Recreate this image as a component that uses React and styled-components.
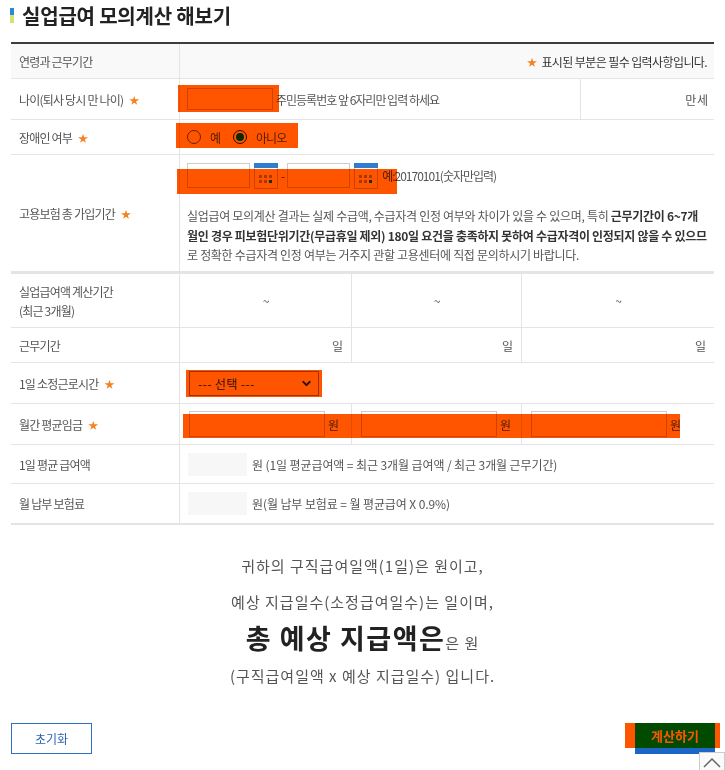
import React from 'react'
import styled, {createGlobalStyle, css} from 'styled-components'
import {ChevronDown} from 'lucide-react'

const GlobalStyle = createGlobalStyle`
  html, body {
    margin: 0;
    padding: 0;
    background: #fff;
  }
  body {
    font-family: "Noto Sans CJK KR", "Noto Sans", sans-serif;
    color: #555;
  }
  *, *::before, *::after {
    box-sizing: border-box;
  }
`

const orange = '#ff5500'
const line = '#e4e4e4'

// orange marker laid over a control (multiply so the control shows through)
const marked = css`
  position: relative;
  &::after {
    content: '';
    position: absolute;
    inset: ${p => p.$mark};
    background: ${orange};
    mix-blend-mode: multiply;
    pointer-events: none;
  }
`

const Page = styled.div`
  width: 725px;
  padding: 0 11px 16px;
`

const Title = styled.h2`
  display: flex;
  align-items: center;
  gap: 8px;
  height: 30px;
  margin: 0 0 12px -1px;
  font-size: 20px;
  font-weight: 700;
  letter-spacing: -0.2px;
  color: #222;
`

const TitleMark = styled.span`
  width: 4px;
  height: 15px;
  background: linear-gradient(#2a8ad4 50%, #d6e36b 50%);
`

const Form = styled.div`
  border-top: 2px solid #3d3d3d;
  border-bottom: 2px solid ${line};
`

const Row = styled.div`
  display: grid;
  grid-template-columns: 169px 1fr;
  height: ${p => p.$h}px;
  border-bottom: ${p => (p.$thick ? 3 : 1)}px solid ${line};
  background: ${p => (p.$head ? '#f9f9f9' : '#fff')};
  &:last-child {
    border-bottom: 0;
  }
`

const Label = styled.div`
  display: flex;
  align-items: center;
  padding: 0 8px;
  border-right: 1px solid ${line};
  font-size: 12px;
  line-height: 19px;
  letter-spacing: -0.8px;
  color: #555;
`

const Star = styled.span`
  color: #f5821f;
  font-size: 10px;
  margin: ${p => (p.$lead ? '0 5px 0 0' : '0 0 0 6px')};
`

const Cells = styled.div`
  display: grid;
  grid-template-columns: ${p => p.$cols || '1fr'};
  ${p => p.$mark && marked}
`

const Cell = styled.div`
  display: flex;
  flex-direction: ${p => (p.$stack ? 'column' : 'row')};
  align-items: ${p => (p.$stack ? 'flex-start' : 'center')};
  justify-content: ${p => p.$align || 'flex-start'};
  padding: ${p => (p.$stack ? '8px' : '0')} ${p => p.$pr ?? 7}px 0 ${p => p.$pl ?? 7}px;
  font-size: 12px;
  line-height: 17px;
  letter-spacing: ${p => (p.$dark ? '-0.6px' : '-1px')};
  color: ${p => (p.$dark ? '#333' : '#555')};
  & + & {
    border-left: 1px solid ${line};
  }
`

const Mark = styled.div`
  display: inline-flex;
  align-items: center;
  ${marked}
`

const Input = styled.input`
  width: ${p => p.$w}px;
  height: ${p => p.$ht}px;
  margin: 0;
  padding: 0;
  border: 1px solid #ccc;
  background: #fff;
  outline: none;
`

const Hint = styled.span`
  margin-left: ${p => p.$gap ?? 3}px;
  white-space: nowrap;
`

const Formula = styled(Hint)`
  letter-spacing: -0.1px;
`

const RadioGroup = styled.div`
  display: flex;
  align-items: center;
  gap: 13px;
  height: 14px;
`

const RadioOption = styled.label`
  display: flex;
  align-items: center;
  gap: 9px;
`

const Radio = styled.span`
  display: inline-flex;
  align-items: center;
  justify-content: center;
  width: 14px;
  height: 14px;
  border-radius: 50%;
  border: 1px solid ${p => (p.$on ? '#222' : '#666')};
  &::after {
    content: '';
    width: 8px;
    height: 8px;
    border-radius: 50%;
    background: ${p => (p.$on ? '#0a7d0a' : 'transparent')};
  }
`

const DateRow = styled.div`
  display: flex;
  align-items: center;
  height: 25px;
`

const DateGroup = styled.div`
  display: flex;
  align-items: center;
  gap: 4px;
`

const Dash = styled.span`
  margin: 0 3px;
`

const Notice = styled.p`
  margin: 18px 0 0;
  font-size: 12px;
  line-height: 19.5px;
  letter-spacing: -0.3px;
  color: #555;
  b {
    color: #333;
  }
`

const Select = styled.div`
  display: flex;
  align-items: center;
  justify-content: space-between;
  width: 130px;
  height: 25px;
  padding: 0 5px 0 8px;
  border: 1px solid #999;
  background: #fff;
  color: #333;
  letter-spacing: 0.4px;
`

const Unit = styled.span`
  margin-left: 3px;
`

const ReadBox = styled.span`
  width: 59px;
  height: 23px;
  background: #f7f7f7;
`

const Result = styled.div`
  margin-top: 23px;
  text-align: center;
  font-size: 15px;
  line-height: 36px;
  letter-spacing: 1px;
  color: #555;
`

const ResultLine = styled.p`
  height: 36px;
  margin: ${p => (p.$last ? '2px 0 0' : '0')};
  padding-top: ${p => (p.$big ? 4 : 0)}px;
`

const Total = styled.strong`
  font-size: 27px;
  line-height: 1;
  letter-spacing: 1.5px;
  color: #222;
`

const Actions = styled.div`
  display: flex;
  justify-content: space-between;
  align-items: flex-start;
  margin-top: 29px;
`

const ResetButton = styled.button`
  width: 81px;
  height: 31px;
  border: 1px solid #2a72c1;
  background: #fff;
  color: #2a64b0;
  font: 12px "Noto Sans CJK KR", sans-serif;
`

const CalcGroup = styled.div`
  display: flex;
  flex-direction: column;
  align-items: flex-end;
  margin-right: -6px;
`

const CalcMark = styled.div`
  padding: 0 5px 0 10px;
  background: ${orange};
`

const CalcButton = styled.button`
  display: block;
  width: 80px;
  height: 25px;
  border: 0;
  background: #004b00;
  color: ${orange};
  font: 700 13px "Noto Sans CJK KR", sans-serif;
`

const CalcShadow = styled.div`
  width: 80px;
  height: 6px;
  margin-right: 5px;
  background: #1b66c6;
`

const ScrollTop = styled.button`
  position: fixed;
  right: 0;
  bottom: -10px;
  width: 26px;
  height: 28px;
  padding: 5px 0 0;
  border: 1px solid #ccc;
  background: #fafafa;
  display: flex;
  justify-content: center;
  align-items: flex-start;
`

const CalendarIcon = () => (
  <svg width="24" height="26" viewBox="0 0 24 26">
    <rect x="0.5" y="0.5" width="23" height="25" fill="#fff" stroke="#c8c8c8" />
    <rect x="0" y="0" width="24" height="5" fill="#2f7dd1" />
    {[5, 10, 15].map(x => (
      <rect key={'a' + x} x={x} y="12" width="3" height="3" fill="#aaa" />
    ))}
    {[5, 10, 15].map(x => (
      <rect key={'b' + x} x={x} y="17" width="3" height="3" fill={x === 15 ? '#1a8a1a' : '#aaa'} />
    ))}
  </svg>
)

const three = '171px 170px 1fr'

export default function App() {
  return (
    <Page>
      <GlobalStyle />
      <Title>
        <TitleMark />
        실업급여 모의계산 해보기
      </Title>

      <Form>
        <Row $h={35} $head>
          <Label>연령과 근무기간</Label>
          <Cells>
            <Cell $align="flex-end" $dark>
              <Star $lead>★</Star>표시된 부분은 필수 입력사항입니다.
            </Cell>
          </Cells>
        </Row>

        <Row $h={41}>
          <Label>나이(퇴사 당시 만 나이)<Star>★</Star></Label>
          <Cells $cols="400px 1fr">
            <Cell>
              <Mark $mark="-3px -6px -2px -9px">
                <Input $w={86} $ht={22} />
              </Mark>
              <Hint>주민등록번호 앞 6자리만 입력 하세요</Hint>
            </Cell>
            <Cell $align="flex-end">만 세</Cell>
          </Cells>
        </Row>

        <Row $h={35}>
          <Label>장애인 여부<Star>★</Star></Label>
          <Cells>
            <Cell>
              <Mark $mark="-7px -12px -4px -11px">
                <RadioGroup>
                  <RadioOption><Radio />예</RadioOption>
                  <RadioOption><Radio $on />아니오</RadioOption>
                </RadioGroup>
              </Mark>
            </Cell>
          </Cells>
        </Row>

        <Row $h={119} $thick>
          <Label>고용보험 총 가입기간<Star>★</Star></Label>
          <Cells>
            <Cell $stack>
              <DateRow>
                <Mark $mark="6px -19px -5px -10px">
                  <DateGroup>
                    <Input $w={63} $ht={25} />
                    <CalendarIcon />
                  </DateGroup>
                  <Dash>-</Dash>
                  <DateGroup>
                    <Input $w={63} $ht={25} />
                    <CalendarIcon />
                  </DateGroup>
                </Mark>
                <Hint $gap={4}>예:20170101(숫자만입력)</Hint>
              </DateRow>
              <Notice>
                실업급여 모의계산 결과는 실제 수급액, 수급자격 인정 여부와 차이가 있을 수 있으며, 특히{' '}
                <b>근무기간이 6~7개월인 경우 피보험단위기간(무급휴일 제외) 180일 요건을 충족하지 못하여 수급자격이 인정되지 않을 수 있으므</b>로
                정확한 수급자격 인정 여부는 거주지 관할 고용센터에 직접 문의하시기 바랍니다.
              </Notice>
            </Cell>
          </Cells>
        </Row>

        <Row $h={54}>
          <Label>실업급여액 계산기간<br />(최근 3개월)</Label>
          <Cells $cols={three}>
            <Cell $align="center">~</Cell>
            <Cell $align="center">~</Cell>
            <Cell $align="center">~</Cell>
          </Cells>
        </Row>

        <Row $h={35}>
          <Label>근무기간</Label>
          <Cells $cols={three}>
            <Cell $align="flex-end" $pr={9}>일</Cell>
            <Cell $align="flex-end" $pr={9}>일</Cell>
            <Cell $align="flex-end" $pr={9}>일</Cell>
          </Cells>
        </Row>

        <Row $h={41}>
          <Label>1일 소정근로시간<Star>★</Star></Label>
          <Cells>
            <Cell $pl={9}>
              <Mark $mark="-1px -3px -1px -3px">
                <Select>
                  --- 선택 ---
                  <ChevronDown size={13} strokeWidth={3.5} color="#222" />
                </Select>
              </Mark>
            </Cell>
          </Cells>
        </Row>

        <Row $h={41}>
          <Label>월간 평균임금<Star>★</Star></Label>
          <Cells $cols={three} $mark="10px 34px 6px 3px">
            {[0, 1, 2].map(i => (
              <Cell key={i} $pl={9}>
                <Input $w={136} $ht={26} />
                <Unit>원</Unit>
              </Cell>
            ))}
          </Cells>
        </Row>

        <Row $h={39}>
          <Label>1일 평균 급여액</Label>
          <Cells>
            <Cell $pl={8}>
              <ReadBox />
              <Formula $gap={5}>원 (1일 평균급여액 = 최근 3개월 급여액 / 최근 3개월 근무기간)</Formula>
            </Cell>
          </Cells>
        </Row>

        <Row $h={39}>
          <Label>월 납부 보험료</Label>
          <Cells>
            <Cell $pl={8}>
              <ReadBox />
              <Formula $gap={5}>원(월 납부 보험료 = 월 평균급여 X 0.9%)</Formula>
            </Cell>
          </Cells>
        </Row>
      </Form>

      <Result>
        <ResultLine>귀하의 구직급여일액(1일)은 원이고,</ResultLine>
        <ResultLine>예상 지급일수(소정급여일수)는 일이며,</ResultLine>
        <ResultLine $big><Total>총 예상 지급액은</Total>은 원</ResultLine>
        <ResultLine $last>(구직급여일액 x 예상 지급일수) 입니다.</ResultLine>
      </Result>

      <Actions>
        <ResetButton>초기화</ResetButton>
        <CalcGroup>
          <CalcMark>
            <CalcButton>계산하기</CalcButton>
          </CalcMark>
          <CalcShadow />
        </CalcGroup>
      </Actions>

      <ScrollTop aria-label="맨 위로">
        <svg width="18" height="10" viewBox="0 0 18 10">
          <polyline points="1,9 9,1 17,9" fill="none" stroke="#666" strokeWidth="1.5" />
        </svg>
      </ScrollTop>
    </Page>
  )
}
